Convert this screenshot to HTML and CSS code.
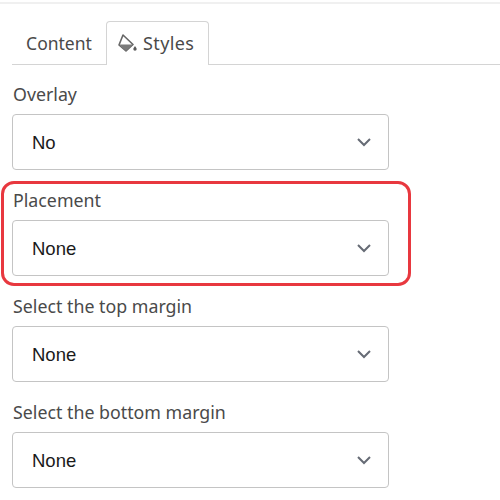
FILE: index.html
```html
<!DOCTYPE html>
<html lang="en">
<head>
    <meta charset="UTF-8">
    <meta name="viewport" content="width=device-width, initial-scale=1.0">
    <title>Styles</title>
    <link rel="stylesheet" href="styles.css">
</head>
<body>
    <div class="panel">
        <div class="tabs">
            <div class="tab">Content</div>
            <div class="tab tab-active">
                <svg class="tab-icon" width="19" height="18" viewBox="0 0 19 18">
                    <path d="M5 1 L15 10.5 L8 17 L1 11 Z" fill="none" stroke="#666" stroke-width="1.6" stroke-linejoin="round"/>
                    <path d="M1 10.5 L15 10.5 L8 17 Z" fill="#7a7a7a"/>
                    <path d="M17 12 C17.9 13.4 18.7 14.1 18.7 15.1 A1.7 1.7 0 0 1 15.3 15.1 C15.3 14.1 16.1 13.4 17 12 Z" fill="#5a5a5a"/>
                </svg>
                <span>Styles</span>
            </div>
        </div>
        <div class="fields">
            <div class="field">
                <label>Overlay</label>
                <div class="select">
                    <span>No</span>
                    <svg class="chevron" width="16" height="10" viewBox="0 0 16 10"><path d="M2 2 L8 8 L14 2" fill="none" stroke="#666b75" stroke-width="2"/></svg>
                </div>
            </div>
            <div class="field">
                <label>Placement</label>
                <div class="select">
                    <span>None</span>
                    <svg class="chevron" width="16" height="10" viewBox="0 0 16 10"><path d="M2 2 L8 8 L14 2" fill="none" stroke="#666b75" stroke-width="2"/></svg>
                </div>
                <div class="highlight"></div>
            </div>
            <div class="field">
                <label>Select the top margin</label>
                <div class="select">
                    <span>None</span>
                    <svg class="chevron" width="16" height="10" viewBox="0 0 16 10"><path d="M2 2 L8 8 L14 2" fill="none" stroke="#666b75" stroke-width="2"/></svg>
                </div>
            </div>
            <div class="field">
                <label>Select the bottom margin</label>
                <div class="select">
                    <span>None</span>
                    <svg class="chevron" width="16" height="10" viewBox="0 0 16 10"><path d="M2 2 L8 8 L14 2" fill="none" stroke="#666b75" stroke-width="2"/></svg>
                </div>
            </div>
        </div>
    </div>
</body>
</html>
```

FILE: styles.css
```css
html, body {
    height: 100%;
}

body {
    font-family: "Noto Sans", Arial, sans-serif;
    margin: 0;
    padding: 0;
    background-color: #fff;
    overflow: hidden;
}

.panel {
    margin-top: 2px;
    border-top: 2px solid #f0f0f0;
    padding-top: 17px;
}

.tabs {
    display: flex;
    height: 43px;
    margin-left: 12px;
    border-bottom: 1px solid #d4d4d4;
}

.tab {
    width: 94px;
    height: 43px;
    display: flex;
    align-items: center;
    justify-content: center;
    box-sizing: border-box;
    padding-top: 1px;
    font-size: 17.5px;
    color: #4a4a4a;
}

.tab-active {
    width: 103px;
    height: 44px;
    justify-content: flex-start;
    gap: 6px;
    padding-bottom: 2px;
    padding-left: 11px;
    font-size: 18px;
    letter-spacing: 0.4px;
    background-color: #fff;
    border: 1px solid #d4d4d4;
    border-bottom: none;
    border-radius: 4px 4px 0 0;
}

.tab-icon {
    flex: none;
}

.fields {
    display: flex;
    flex-direction: column;
    gap: 18px;
    padding: 17px 0 0 12px;
}

.field {
    position: relative;
    width: 377px;
}

label {
    display: block;
    height: 32px;
    padding-left: 1px;
    line-height: 24px;
    font-size: 17.8px;
    color: #4a4a4a;
}

.select {
    height: 56px;
    display: flex;
    align-items: center;
    justify-content: space-between;
    box-sizing: border-box;
    padding: 2px 16px 0 19px;
    border: 1px solid #c4c4c4;
    border-radius: 4px;
    font-family: "Liberation Sans", Arial, sans-serif;
    font-size: 18.5px;
    color: #1a1a1a;
}

.chevron {
    flex: none;
    margin-top: -2px;
}

.highlight {
    position: absolute;
    left: -11px;
    top: -7px;
    width: 410px;
    height: 105px;
    box-sizing: border-box;
    border: 3px solid #e8383f;
    border-radius: 13px;
}
```
